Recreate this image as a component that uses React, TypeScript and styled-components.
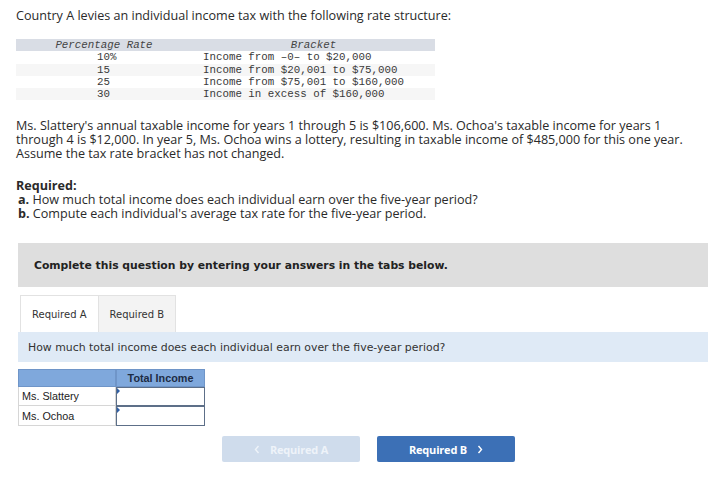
import styled, { createGlobalStyle } from 'styled-components';

const Global = createGlobalStyle`
  body {
    margin: 0;
    background: #fff;
    color: #222;
    font-family: "Open Sans", "Liberation Sans", sans-serif;
  }
`;

const Page = styled.div`
  width: 720px;
  height: 495px;
  padding: 9px 12px 0 16px;
  box-sizing: border-box;
  overflow: hidden;
`;

const Text = styled.div<{ $top?: number }>`
  margin-top: ${(p) => p.$top ?? 0}px;
  font-size: 12.6px;
  font-weight: 500;
  line-height: 14px;
  color: #2a2a2a;
  white-space: nowrap;
`;

const RateTable = styled.div`
  margin-top: 16px;
  width: 419px;
  display: grid;
  grid-template-columns: 176px 1fr;
  font-family: "Liberation Mono", "Courier New", monospace;
  font-size: 10.8px;
  line-height: 12.3px;
  color: #3a3a3a;
`;

const RateHead = styled.div`
  background: #d9dde5;
  text-align: center;
  font-style: italic;
  color: #444;
`;

const RateCell = styled.div<{ $shade: boolean; $pad: number }>`
  background: ${(p) => (p.$shade ? '#f6f6f6' : '#fff')};
  padding-left: ${(p) => p.$pad}px;
  white-space: pre;
`;

const Bold = styled.span`
  font-weight: 700;
`;

const Line = styled.div<{ $indent?: boolean }>`
  padding-left: ${(p) => (p.$indent ? 2 : 0)}px;
`;

const Notice = styled.div`
  margin: 22px 0 0 2px;
  width: 690px;
  height: 44px;
  background: #dedede;
  display: flex;
  align-items: center;
  padding-left: 16px;
  box-sizing: border-box;
  font-family: "DejaVu Sans", Verdana, sans-serif;
  font-weight: 700;
  font-size: 10.8px;
  color: #222;
`;

const Tabs = styled.div`
  display: flex;
  margin: 8px 0 0 4px;
  height: 37px;
`;

const Tab = styled.div<{ $active: boolean }>`
  display: flex;
  align-items: center;
  padding: 0 11px;
  font-family: "DejaVu Sans", Verdana, sans-serif;
  font-size: 10px;
  color: #333;
  background: ${(p) => (p.$active ? '#fff' : '#f3f3f3')};
  border: 1px solid #e2e2e2;
  border-bottom: none;
  border-left: ${(p) => (p.$active ? '1px solid #e2e2e2' : 'none')};
`;

const Prompt = styled.div`
  margin-left: 2px;
  width: 690px;
  height: 30px;
  background: #dfeaf6;
  display: flex;
  align-items: center;
  padding-left: 10px;
  box-sizing: border-box;
  font-family: "DejaVu Sans", Verdana, sans-serif;
  font-size: 10.9px;
  color: #333;
`;

const AnswerTable = styled.div`
  margin: 7px 0 0 2px;
  width: 187px;
  display: grid;
  grid-template-columns: 98px 89px;
  grid-template-rows: 18px 19px 20px;
  font-family: "Liberation Sans", Arial, sans-serif;
  font-size: 10.8px;
  color: #222;
`;

const HeadCell = styled.div`
  background: #7fa8dc;
  border: 1px solid #6f95c8;
  display: flex;
  align-items: center;
  justify-content: center;
  font-weight: 700;
  color: #1d2c44;
`;

const NameCell = styled.div`
  border: 1px solid #d6d6d6;
  border-top: none;
  display: flex;
  align-items: center;
  padding-left: 3px;
`;

const InputCell = styled.div`
  position: relative;
  border: 1px solid #5d6f88;
  background: #fff;
`;

const Flag = styled.span`
  position: absolute;
  left: 0;
  top: 0;
  width: 0;
  height: 0;
  border-top: 3px solid transparent;
  border-bottom: 3px solid transparent;
  border-left: 3px solid #2f5fa6;
`;

const NavRow = styled.div`
  display: flex;
  gap: 17px;
  margin: 10px 0 0 206px;
`;

const NavButton = styled.div<{ $disabled?: boolean }>`
  width: 138px;
  height: 26px;
  display: flex;
  align-items: center;
  justify-content: center;
  gap: 10px;
  border-radius: 2px;
  background: ${(p) => (p.$disabled ? '#cfdcec' : '#3c70b6')};
  color: ${(p) => (p.$disabled ? '#eef3f9' : '#fff')};
  font-family: "Open Sans", "Liberation Sans", sans-serif;
  font-weight: 700;
  font-size: 11px;
  letter-spacing: -0.2px;
`;

const rates = [
  ['10%', 'Income from –0– to $20,000'],
  ['15', 'Income from $20,001 to $75,000'],
  ['25', 'Income from $75,001 to $160,000'],
  ['30', 'Income in excess of $160,000'],
];

const Chevron = ({ dir }: { dir: 'left' | 'right' }) => (
  <svg width="6" height="9" viewBox="0 0 6 9">
    <path
      d={dir === 'left' ? 'M4.5 1 L1.5 4.5 L4.5 8' : 'M1.5 1 L4.5 4.5 L1.5 8'}
      fill="none"
      stroke="currentColor"
      strokeWidth="1.4"
    />
  </svg>
);

function App() {
  return (
    <Page>
      <Global />
      <Text>Country A levies an individual income tax with the following rate structure:</Text>

      <RateTable>
        <RateHead>Percentage Rate</RateHead>
        <RateHead>Bracket</RateHead>
        {rates.map(([rate, bracket], i) => [
          <RateCell key={rate + 'r'} $shade={i % 2 === 1} $pad={81}>{rate}</RateCell>,
          <RateCell key={rate + 'b'} $shade={i % 2 === 1} $pad={11}>{bracket}</RateCell>,
        ])}
      </RateTable>

      <Text $top={19}>
        <Line>Ms. Slattery's annual taxable income for years 1 through 5 is $106,600. Ms. Ochoa's taxable income for years 1</Line>
        <Line>through 4 is $12,000. In year 5, Ms. Ochoa wins a lottery, resulting in taxable income of $485,000 for this one year.</Line>
        <Line>Assume the tax rate bracket has not changed.</Line>
      </Text>

      <Text $top={18}>
        <Bold>Required:</Bold>
        <Line $indent><Bold>a.</Bold> How much total income does each individual earn over the five-year period?</Line>
        <Line $indent><Bold>b.</Bold> Compute each individual's average tax rate for the five-year period.</Line>
      </Text>

      <Notice>Complete this question by entering your answers in the tabs below.</Notice>

      <Tabs>
        <Tab $active>Required A</Tab>
        <Tab $active={false}>Required B</Tab>
      </Tabs>

      <Prompt>How much total income does each individual earn over the five-year period?</Prompt>

      <AnswerTable>
        <HeadCell />
        <HeadCell>Total Income</HeadCell>
        <NameCell>Ms. Slattery</NameCell>
        <InputCell><Flag /></InputCell>
        <NameCell>Ms. Ochoa</NameCell>
        <InputCell><Flag /></InputCell>
      </AnswerTable>

      <NavRow>
        <NavButton $disabled><Chevron dir="left" />Required A</NavButton>
        <NavButton>Required B<Chevron dir="right" /></NavButton>
      </NavRow>
    </Page>
  );
}

export default App;
